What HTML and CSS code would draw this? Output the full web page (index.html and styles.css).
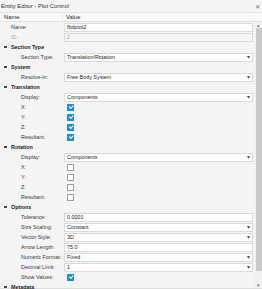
FILE: index.html
```html
<!DOCTYPE html>
<html lang="en">
  <head>
    <meta charset="UTF-8" />
    <title>Entity Editor - Plot Control</title>
    <link rel="stylesheet" href="styles.css">
  </head>
  <body>
    <div class="editor">
      <div class="titlebar">
        <span>Entity Editor - Plot Control</span>
        <span class="close">&#x2715;</span>
      </div>
      <div class="head">
        <div class="col-name">Name</div>
        <div class="col-value">Value</div>
      </div>
      <div class="body">
        <div class="rows">
          <div class="row"><div class="label top">Name:</div><div class="value"><div class="field">fbdplot2</div></div></div>
          <div class="row"><div class="label top dim">ID:</div><div class="value"><div class="field disabled">2</div></div></div>
          <div class="row section"><span class="toggle"></span>Section Type</div>
          <div class="row"><div class="label">Section Type:</div><div class="value"><div class="field select">Translation/Rotation</div></div></div>
          <div class="row section"><span class="toggle"></span>System</div>
          <div class="row"><div class="label">Resolve-in:</div><div class="value"><div class="field select">Free Body System</div></div></div>
          <div class="row section"><span class="toggle"></span>Translation</div>
          <div class="row"><div class="label">Display:</div><div class="value"><div class="field select">Components</div></div></div>
          <div class="row"><div class="label">X:</div><div class="value"><span class="check on"></span></div></div>
          <div class="row"><div class="label">Y:</div><div class="value"><span class="check on"></span></div></div>
          <div class="row"><div class="label">Z:</div><div class="value"><span class="check on"></span></div></div>
          <div class="row"><div class="label">Resultant:</div><div class="value"><span class="check on"></span></div></div>
          <div class="row section"><span class="toggle"></span>Rotation</div>
          <div class="row"><div class="label">Display:</div><div class="value"><div class="field select">Components</div></div></div>
          <div class="row"><div class="label">X:</div><div class="value"><span class="check"></span></div></div>
          <div class="row"><div class="label">Y:</div><div class="value"><span class="check"></span></div></div>
          <div class="row"><div class="label">Z:</div><div class="value"><span class="check"></span></div></div>
          <div class="row"><div class="label">Resultant:</div><div class="value"><span class="check"></span></div></div>
          <div class="row section"><span class="toggle"></span>Options</div>
          <div class="row"><div class="label">Tolerance:</div><div class="value"><div class="field">0.0001</div></div></div>
          <div class="row"><div class="label">Size Scaling:</div><div class="value"><div class="field select">Constant</div></div></div>
          <div class="row"><div class="label">Vector Style:</div><div class="value"><div class="field select">3D</div></div></div>
          <div class="row"><div class="label">Arrow Length:</div><div class="value"><div class="field">75.0</div></div></div>
          <div class="row"><div class="label">Numeric Format:</div><div class="value"><div class="field select">Fixed</div></div></div>
          <div class="row"><div class="label">Decimal Limit:</div><div class="value"><div class="field select">1</div></div></div>
          <div class="row"><div class="label">Show Values:</div><div class="value"><span class="check on"></span></div></div>
          <div class="row section"><span class="toggle"></span>Metadata</div>
        </div>
        <div class="scrollbar">
          <div class="arrow">&#x25B4;</div>
          <div class="thumb"></div>
          <div class="track"></div>
          <div class="arrow">&#x25BE;</div>
        </div>
      </div>
    </div>
  </body>
</html>
```
FILE: styles.css
```css
body {
  margin: 0;
  padding: 0;
  background: #f4f4f4;
  font-family: "Liberation Sans", Arial, sans-serif;
  font-size: 5.4px;
  color: #262626;
}
.editor {
  width: 262px;
  height: 289px;
  overflow: hidden;
  display: flex;
  flex-direction: column;
}
.titlebar {
  height: 12px;
  display: flex;
  align-items: center;
  justify-content: space-between;
  padding: 0 2px 0 1px;
  font-size: 5.9px;
  color: #333;
}
.close {
  font-size: 6px;
  color: #666;
}
.head {
  height: 10px;
  flex-shrink: 0;
  display: flex;
  align-items: center;
  background: #f9f9f9;
  border-top: 1px solid #e2e2e2;
  border-bottom: 1px solid #e2e2e2;
  box-sizing: border-box;
  font-size: 5.8px;
}
.col-name {
  width: 63px;
  padding-left: 4px;
  box-sizing: border-box;
  border-right: 1px solid #e2e2e2;
}
.col-value {
  padding-left: 3px;
}
.body {
  flex: 1;
  display: flex;
  min-height: 0;
  border-bottom: 1px solid #dcdcdc;
}
.rows {
  flex: 1;
  min-width: 0;
}
.row {
  height: 10px;
  display: flex;
  align-items: center;
  white-space: nowrap;
}
.label {
  width: 64px;
  flex-shrink: 0;
  padding-left: 21px;
  box-sizing: border-box;
  color: #3a3a3a;
}
.label.top {
  padding-left: 11px;
}
.label.dim {
  color: #a8a8a8;
}
.value {
  flex: 1;
  padding-right: 2px;
  display: flex;
  align-items: center;
}
.field {
  flex: 1;
  height: 9px;
  box-sizing: border-box;
  background: #fff;
  border: 1px solid #dadada;
  padding-left: 2px;
  line-height: 7px;
  position: relative;
}
.field.disabled {
  background: #f4f4f4;
  color: #a8a8a8;
}
.field.select::after {
  content: "\25BE";
  position: absolute;
  right: 2px;
  top: 0;
  font-size: 6px;
  color: #555;
}
.section {
  padding-left: 4px;
  font-weight: bold;
  color: #222;
}
.toggle {
  width: 3px;
  height: 2px;
  background: #444;
  margin-right: 4px;
}
.check {
  width: 7px;
  height: 7px;
  margin-left: 3px;
  box-sizing: border-box;
  border: 1px solid #a0a0a0;
  background: #fff;
  display: flex;
  align-items: center;
  justify-content: center;
}
.check.on {
  border-color: #1a8fe0;
  background: #1a8fe0;
}
.check.on::after {
  content: "";
  width: 3px;
  height: 1.5px;
  border-left: 1px solid #fff;
  border-bottom: 1px solid #fff;
  transform: rotate(-45deg);
  margin-top: -1px;
}
.scrollbar {
  width: 7px;
  display: flex;
  flex-direction: column;
  align-items: center;
  background: #f0f0f0;
}
.arrow {
  height: 6px;
  font-size: 5px;
  line-height: 6px;
  color: #777;
}
.thumb {
  width: 6px;
  height: 243px;
  background: #c9c9c9;
}
.track {
  flex: 1;
}
```
